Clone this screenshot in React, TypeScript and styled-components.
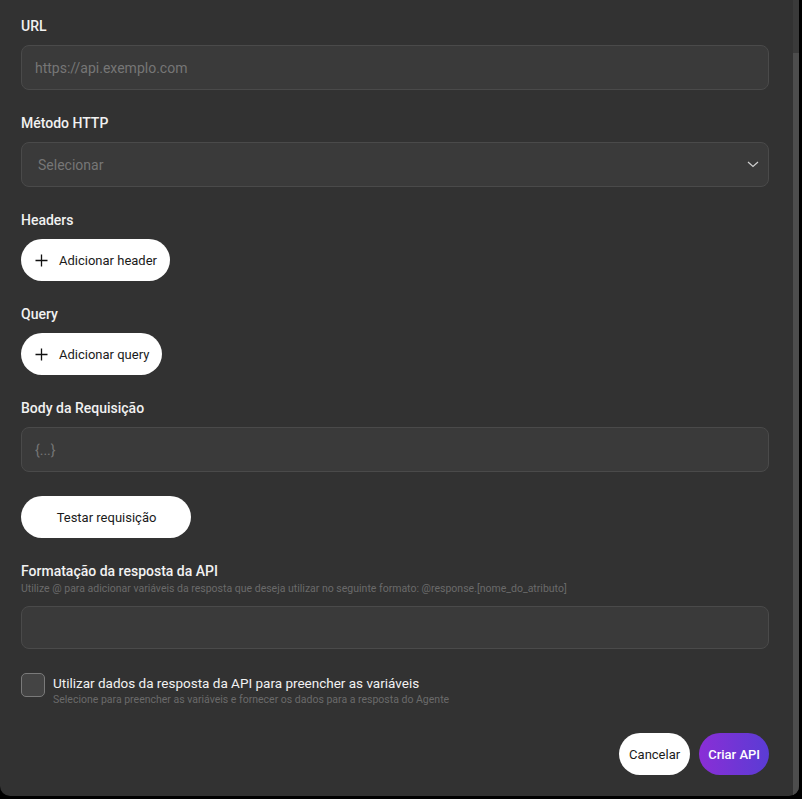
import styled, { createGlobalStyle } from "styled-components";

const GlobalStyle = createGlobalStyle`
  html, body {
    margin: 0;
    padding: 0;
    background-color: #000;
  }
  body {
    font-family: Roboto, "Noto Sans", sans-serif;
    -webkit-font-smoothing: antialiased;
  }
`;

const Modal = styled.div`
  display: flex;
  width: 799px;
  height: 796px;
  background-color: #323232;
  border-radius: 0 0 10px 10px;
  overflow: hidden;
`;

const Body = styled.div`
  flex: 1;
  display: flex;
  flex-direction: column;
  padding: 17px 24px 20px 21px;
`;

const ScrollTrack = styled.div`
  display: flex;
  flex-direction: column;
  width: 6px;
  padding-top: 53px;
  background-color: #3a3a3a;
`;

const ScrollThumb = styled.div`
  flex: 1;
  background-color: #4d4d4d;
`;

const Field = styled.div`
  display: flex;
  flex-direction: column;
  margin-bottom: 24px;
`;

const Label = styled.label`
  font-size: 14px;
  line-height: 18px;
  font-weight: 500;
  color: #f1f1f1;
  margin-bottom: 10px;
`;

const Hint = styled.span`
  font-size: 10.5px;
  line-height: 14px;
  color: #6a6a6a;
  margin: -8px 0 10px;
`;

const Input = styled.input<{ $h?: number }>`
  box-sizing: border-box;
  height: ${(p) => p.$h ?? 45}px;
  width: 100%;
  padding: 0 13px;
  background-color: #3a3a3a;
  border: 1px solid #4a4a4a;
  border-radius: 8px;
  color: #eee;
  font-family: inherit;
  font-size: 14px;
  outline: none;

  &::placeholder {
    color: #767676;
  }
`;

const SelectBox = styled.div`
  box-sizing: border-box;
  height: 45px;
  display: flex;
  align-items: center;
  justify-content: space-between;
  padding: 0 9px 0 16px;
  background-color: #3a3a3a;
  border: 1px solid #4a4a4a;
  border-radius: 8px;
  color: #767676;
  font-size: 14px;
`;

const PillButton = styled.button<{ $w?: number }>`
  display: inline-flex;
  align-items: center;
  justify-content: center;
  gap: 11px;
  align-self: flex-start;
  height: 42px;
  width: ${(p) => (p.$w ? `${p.$w}px` : "auto")};
  padding: 0 13px 0 14px;
  border: none;
  border-radius: 21px;
  background-color: #fff;
  color: #1a1a1a;
  font-family: inherit;
  font-size: 13px;
  cursor: pointer;
`;

const SmallPill = styled(PillButton)`
  padding: 0 10px;
`;

const PrimaryButton = styled(SmallPill)`
  padding: 0 9px;
  background: linear-gradient(90deg, #8a2ed6 0%, #5a3cd4 100%);
  color: #fff;
  font-weight: 500;
`;

const CheckRow = styled.div`
  display: flex;
  gap: 8px;
  margin-bottom: 25px;
`;

const Checkbox = styled.span`
  box-sizing: border-box;
  flex: 0 0 24px;
  height: 24px;
  border-radius: 5px;
  border: 1px solid #7a7a7a;
  background-color: #444;
`;

const CheckText = styled.div`
  display: flex;
  flex-direction: column;
  padding-top: 1px;
`;

const CheckTitle = styled.span`
  font-size: 13.5px;
  line-height: 18px;
  color: #f1f1f1;
`;

const CheckHint = styled.span`
  font-size: 10.5px;
  line-height: 16px;
  color: #6a6a6a;
`;

const Footer = styled.div`
  display: flex;
  justify-content: flex-end;
  gap: 9px;
`;

function Plus() {
  return (
    <svg width="13" height="13" viewBox="0 0 13 13" fill="none">
      <path d="M6.5 0.5v12M0.5 6.5h12" stroke="#111" strokeWidth="1.3" />
    </svg>
  );
}

function Chevron() {
  return (
    <svg width="12" height="7" viewBox="0 0 12 7" fill="none">
      <path d="M1 1l5 4.5 5-4.5" stroke="#d0d0d0" strokeWidth="1.2" />
    </svg>
  );
}

export default function App() {
  return (
    <>
      <GlobalStyle />
      <Modal>
        <Body>
          <Field>
            <Label>URL</Label>
            <Input placeholder="https://api.exemplo.com" />
          </Field>

          <Field>
            <Label>Método HTTP</Label>
            <SelectBox>
              Selecionar
              <Chevron />
            </SelectBox>
          </Field>

          <Field>
            <Label>Headers</Label>
            <PillButton>
              <Plus />
              Adicionar header
            </PillButton>
          </Field>

          <Field>
            <Label>Query</Label>
            <PillButton>
              <Plus />
              Adicionar query
            </PillButton>
          </Field>

          <Field>
            <Label>Body da Requisição</Label>
            <Input placeholder="{...}" />
          </Field>

          <Field>
            <PillButton $w={170}>Testar requisição</PillButton>
          </Field>

          <Field>
            <Label>Formatação da resposta da API</Label>
            <Hint>
              Utilize @ para adicionar variáveis da resposta que deseja utilizar no seguinte formato:
              @response.[nome_do_atributo]
            </Hint>
            <Input $h={43} />
          </Field>

          <CheckRow>
            <Checkbox />
            <CheckText>
              <CheckTitle>Utilizar dados da resposta da API para preencher as variáveis</CheckTitle>
              <CheckHint>Selecione para preencher as variáveis e fornecer os dados para a resposta do Agente</CheckHint>
            </CheckText>
          </CheckRow>

          <Footer>
            <SmallPill>Cancelar</SmallPill>
            <PrimaryButton>Criar API</PrimaryButton>
          </Footer>
        </Body>
        <ScrollTrack>
          <ScrollThumb />
        </ScrollTrack>
      </Modal>
    </>
  );
}
